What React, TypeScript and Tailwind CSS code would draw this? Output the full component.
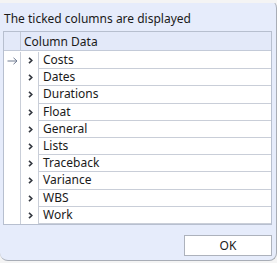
import React from "react";

const rows = [
  "Costs",
  "Dates",
  "Durations",
  "Float",
  "General",
  "Lists",
  "Traceback",
  "Variance",
  "WBS",
  "Work",
];

const Chevron = () => (
  <svg width="5" height="7" viewBox="0 0 5 7" className="block">
    <path d="M1 0.8 L3.8 3.5 L1 6.2" fill="none" stroke="#33373f" strokeWidth="1.6" />
  </svg>
);

const Arrow = () => (
  <svg width="11" height="8" viewBox="0 0 11 8" className="block">
    <path d="M0.5 4 H10 M6.5 0.8 L10 4 L6.5 7.2" fill="none" stroke="#6f7a90" strokeWidth="1" />
  </svg>
);

export default function App() {
  return (
    <div
      className="w-[277px] h-[263px] bg-[#f4f4f4] overflow-hidden"
      style={{ fontFamily: '"Noto Sans", "Open Sans", sans-serif' }}
    >
      <div className="w-[277px] h-[261px] bg-[#e6ecfb] border-r border-b border-[#a8adb6] rounded-tr-[8px] rounded-b-[8px] flex flex-col">
        <div className="h-[3px] bg-[#f4f4f4] rounded-tr-[8px]" />
        <div className="h-[28px] pl-[4px] pt-[8px] text-[12px] leading-[16px] text-[#1a1a1a]">
          The ticked columns are displayed
        </div>
        <div className="ml-[3px] w-[269px] h-[194px] bg-white border border-[#b7bfcf] flex flex-col">
          <div className="h-[19px] flex bg-[#e3e9f9] border-b border-[#c3cad8]">
            <div className="w-[17px] border-r border-[#c3cad8]" />
            <div className="pl-[3px] text-[12px] leading-[19px] text-[#1a1a1a]">Column Data</div>
          </div>
          <div className="flex pt-[1px]">
            <div className="w-[17px] flex flex-col border-r border-[#c9ced8]">
              {rows.map((r, i) => (
                <div key={r} className="h-[17.2px] flex items-center justify-center">
                  {i === 0 && <Arrow />}
                </div>
              ))}
            </div>
            <div className="w-[17px] flex flex-col">
              {rows.map((r) => (
                <div key={r} className="h-[17.2px] flex items-center pl-[7px]">
                  <Chevron />
                </div>
              ))}
            </div>
            <div className="flex-1 flex flex-col">
              {rows.map((r) => (
                <div
                  key={r}
                  className="h-[17.2px] border-l border-b border-[#c9ced8] pl-[4px] text-[12px] leading-[16px] text-[#1a1a1a] flex items-center"
                >
                  {r}
                </div>
              ))}
            </div>
          </div>
        </div>
        <div className="flex justify-end pr-[4px] pt-[10px]">
          <button className="w-[88px] h-[21px] bg-white border border-[#adb2bc] text-[12px] leading-[16px] text-[#1a1a1a]">
            OK
          </button>
        </div>
      </div>
    </div>
  );
}
